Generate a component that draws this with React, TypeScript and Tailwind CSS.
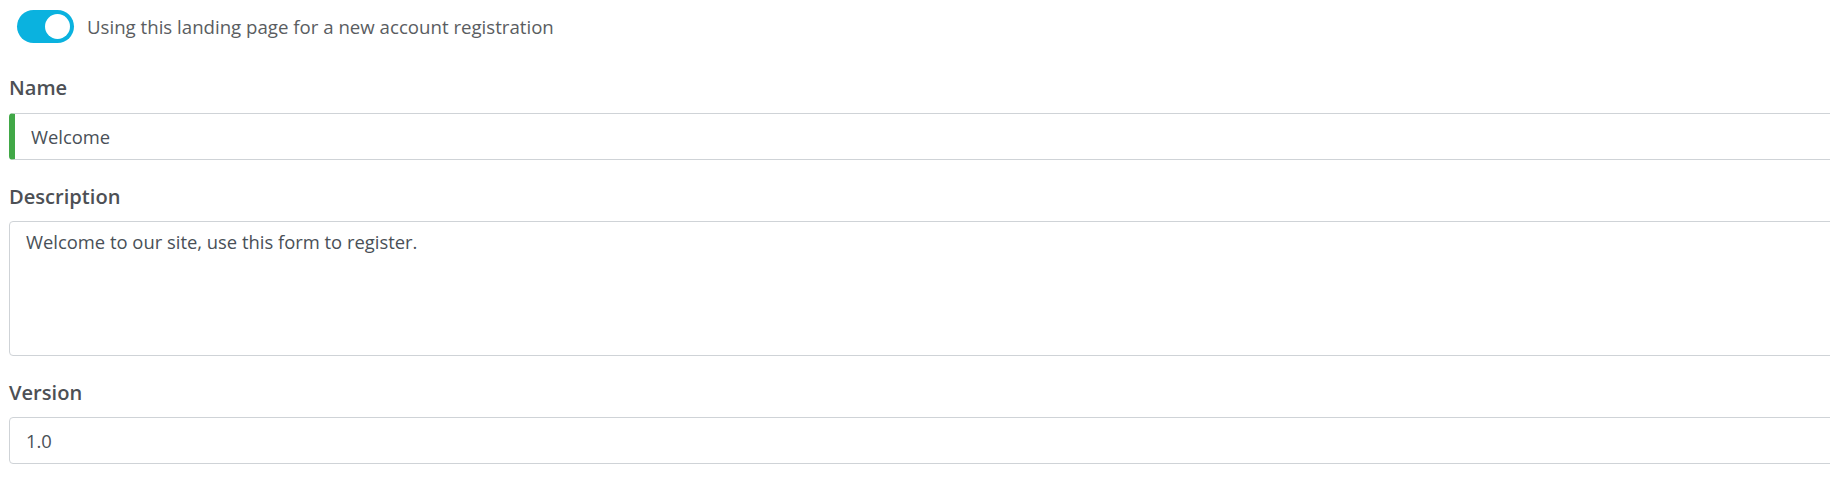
import { useState } from "react";

export default function App() {
  const [enabled, setEnabled] = useState(true);
  const [name, setName] = useState("Welcome");
  const [description, setDescription] = useState("Welcome to our site, use this form to register.");
  const [version, setVersion] = useState("1.0");

  return (
    <main className="min-h-screen w-full overflow-hidden bg-white font-['Open_Sans',sans-serif] text-[#495057]">
      <div className="pl-[9px] pt-[10px]">
        <div className="flex h-[33px] items-center pl-[8px]">
          <button
            type="button"
            role="switch"
            aria-checked={enabled}
            onClick={() => setEnabled(!enabled)}
            className={`relative h-[33px] w-[57px] shrink-0 rounded-full transition ${enabled ? "bg-[#0ab2df]" : "bg-[#cfd3d7]"}`}
          >
            <span
              className={`absolute top-[4px] h-[25px] w-[25px] rounded-full bg-white transition-all ${enabled ? "left-[28px]" : "left-[4px]"}`}
            />
          </button>
          <span className="ml-[13px] text-[18.65px] text-[#5a5d61]">
            Using this landing page for a new account registration
          </span>
        </div>

        <form className="mt-[30px] flex flex-col gap-[22px]" onSubmit={(e) => e.preventDefault()}>
          <div>
            <label className="mb-[10px] block text-[20.1px] font-semibold leading-[30px] text-[#4d5055]">Name</label>
            <input
              type="text"
              value={name}
              onChange={(e) => setName(e.target.value)}
              className="block h-[47px] w-[1834px] rounded-[4px] border border-l-[6px] border-[#cfd3d7] border-l-[#41a847] bg-white pl-[16px] pr-[16px] text-[18.4px] text-[#495057] outline-none"
            />
          </div>

          <div>
            <label className="mb-[9px] block text-[20.1px] font-semibold leading-[30px] text-[#4d5055]">Description</label>
            <textarea
              value={description}
              onChange={(e) => setDescription(e.target.value)}
              className="block h-[135px] w-[1834px] resize-y rounded-[4px] border border-[#cfd3d7] bg-white px-[16px] pt-[6px] text-[18.4px] leading-[27.6px] text-[#495057] outline-none"
            />
          </div>

          <div>
            <label className="mb-[9px] block text-[20.1px] font-semibold leading-[30px] text-[#4d5055]">Version</label>
            <input
              type="text"
              value={version}
              onChange={(e) => setVersion(e.target.value)}
              className="block h-[47px] w-[1834px] rounded-[4px] border border-[#cfd3d7] bg-white px-[16px] text-[18.4px] text-[#495057] outline-none"
            />
          </div>
        </form>
      </div>
    </main>
  );
}
